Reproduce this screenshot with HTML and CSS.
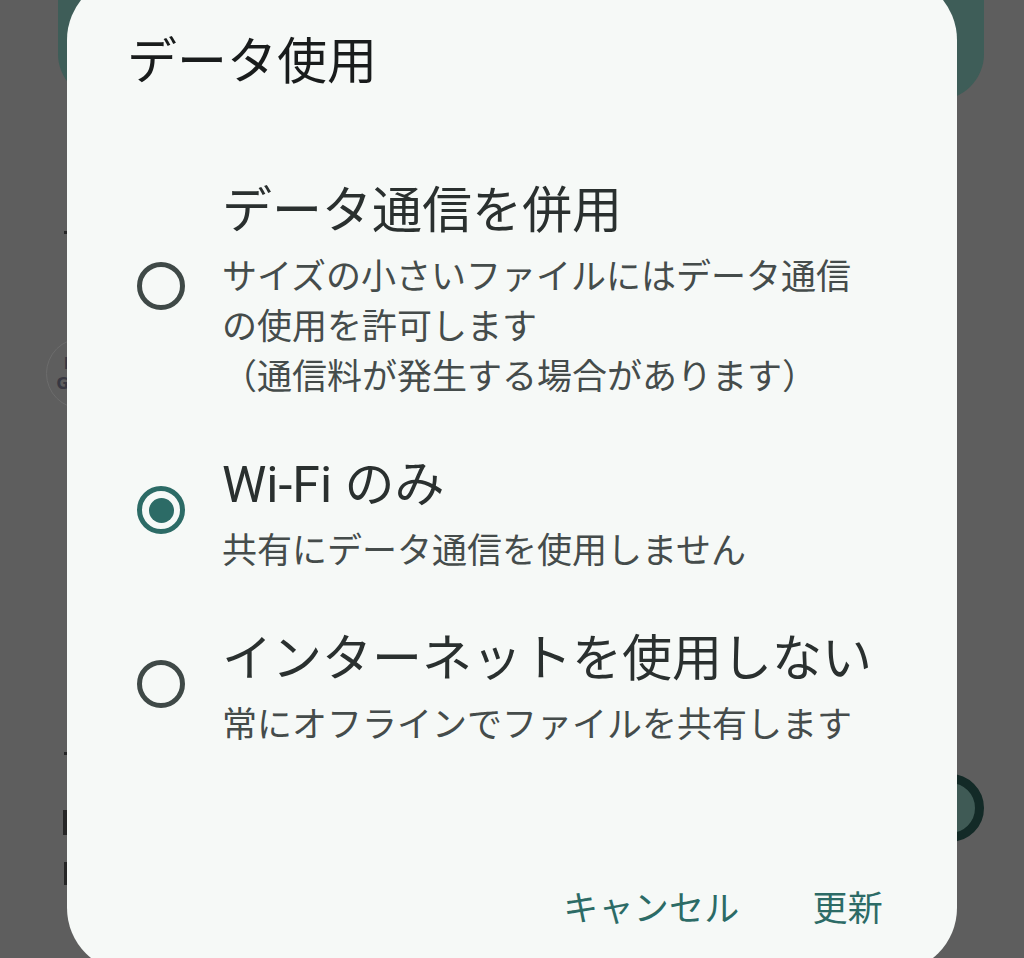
FILE: index.html
```html
<!DOCTYPE html>
<html lang="ja">
<head>
<meta charset="utf-8">
<title>データ使用</title>
<link rel="stylesheet" href="styles.css">
</head>
<body>
<div class="screen">
  <div class="backdrop">
    <div class="hero"></div>
    <div class="frag dash1"></div>
    <div class="logo"><span>H</span><span>GA</span></div>
    <div class="frag dash2"></div>
    <div class="row-bottom">
      <div class="frag-col">
        <div class="frag bar1"></div>
        <div class="frag bar2"></div>
      </div>
      <div class="toggle"></div>
    </div>
  </div>

  <div class="dialog" role="dialog">
    <h1 class="title">データ使用</h1>
    <div class="options">
      <label class="option">
        <span class="radio"></span>
        <span class="text">
          <span class="opt-title">データ通信を併用</span>
          <span class="opt-sub">サイズの小さいファイルにはデータ通信<br>の使用を許可します<br>（通信料が発生する場合があります）</span>
        </span>
      </label>
      <label class="option">
        <span class="radio checked"></span>
        <span class="text">
          <span class="opt-title">Wi-Fi のみ</span>
          <span class="opt-sub">共有にデータ通信を使用しません</span>
        </span>
      </label>
      <label class="option">
        <span class="radio"></span>
        <span class="text">
          <span class="opt-title">インターネットを使用しない</span>
          <span class="opt-sub">常にオフラインでファイルを共有します</span>
        </span>
      </label>
    </div>
    <div class="actions">
      <button class="btn">キャンセル</button>
      <button class="btn">更新</button>
    </div>
  </div>
</div>
</body>
</html>
```

FILE: styles.css
```css
* { box-sizing: border-box; }
html, body { margin: 0; padding: 0; }
body {
  font-family: Roboto, "Noto Sans CJK JP", sans-serif;
  background: #5e5e5e;
}
.screen {
  position: relative;
  width: 1024px;
  height: 958px;
  overflow: hidden;
  background: #5e5e5e;
}

/* dimmed app content behind the dialog */
.backdrop {
  display: flex;
  flex-direction: column;
  padding: 0 40px 0 58px;
}
.hero {
  height: 100px;
  background: #3e5d58;
  border-radius: 0 0 46px 46px;
}
.frag { background: #262626; }
.dash1 { margin: 131px 0 0 6px; width: 4px; height: 3px; }
.logo {
  margin: 104px 0 0 -12px;
  width: 71px;
  height: 71px;
  border-radius: 50%;
  border: 1.5px solid #6c6c6c;
  display: flex;
  flex-direction: column;
  align-items: center;
  justify-content: center;
  font-family: "DejaVu Sans", sans-serif;
  font-weight: 700;
  font-size: 15px;
  line-height: 20px;
  letter-spacing: 3px;
  color: #383842;
  padding-right: 20px;
}
.dash2 { margin: 343px 0 0 6px; width: 4px; height: 3px; }
.row-bottom {
  margin-top: 19px;
  display: flex;
  justify-content: space-between;
  align-items: flex-start;
}
.frag-col { display: flex; flex-direction: column; padding-top: 36px; }
.bar1 { margin-left: 5px; width: 4px; height: 25px; }
.bar2 { margin: 27px 0 0 6px; width: 3px; height: 23px; }
.toggle {
  width: 68px;
  height: 68px;
  border-radius: 50%;
  border: 9px solid #132a27;
  background: #3f5a55;
}

/* dialog */
.dialog {
  position: absolute;
  left: 67px;
  top: -24px;
  width: 890px;
  height: 996px;
  background: #f6f9f7;
  border-radius: 64px;
  display: flex;
  flex-direction: column;
}
.title {
  margin: 0;
  padding: 56px 0 0 60px;
  font-weight: 400;
  font-size: 50px;
  line-height: 60px;
  color: #191c1c;
}
.options {
  margin-top: 57px;
  display: flex;
  flex-direction: column;
}
.option {
  display: flex;
  align-items: center;
  gap: 37px;
  padding: 20px 0 20px 70px;
}
.radio {
  flex: none;
  width: 48px;
  height: 48px;
  border-radius: 50%;
  border: 5px solid #3f4947;
  display: flex;
  align-items: center;
  justify-content: center;
}
.radio.checked { border-color: #2c6b66; }
.radio.checked::after {
  content: "";
  width: 25px;
  height: 25px;
  border-radius: 50%;
  background: #2c6b66;
}
.text { display: flex; flex-direction: column; }
.opt-title {
  font-size: 50px;
  line-height: 84px;
  color: #2a302f;
}
.opt-sub {
  font-size: 35px;
  line-height: 50px;
  letter-spacing: 0;
  color: #454c4b;
}
.actions {
  margin-top: auto;
  display: flex;
  justify-content: flex-end;
  gap: 13px;
  padding: 0 44px 37px 0;
}
.btn {
  font-family: Roboto, "Noto Sans CJK JP", sans-serif;
  font-size: 35px;
  line-height: 50px;
  letter-spacing: 0.25px;
  color: #2c6b66;
  background: none;
  border: 0;
  padding: 0 30px;
}
```
